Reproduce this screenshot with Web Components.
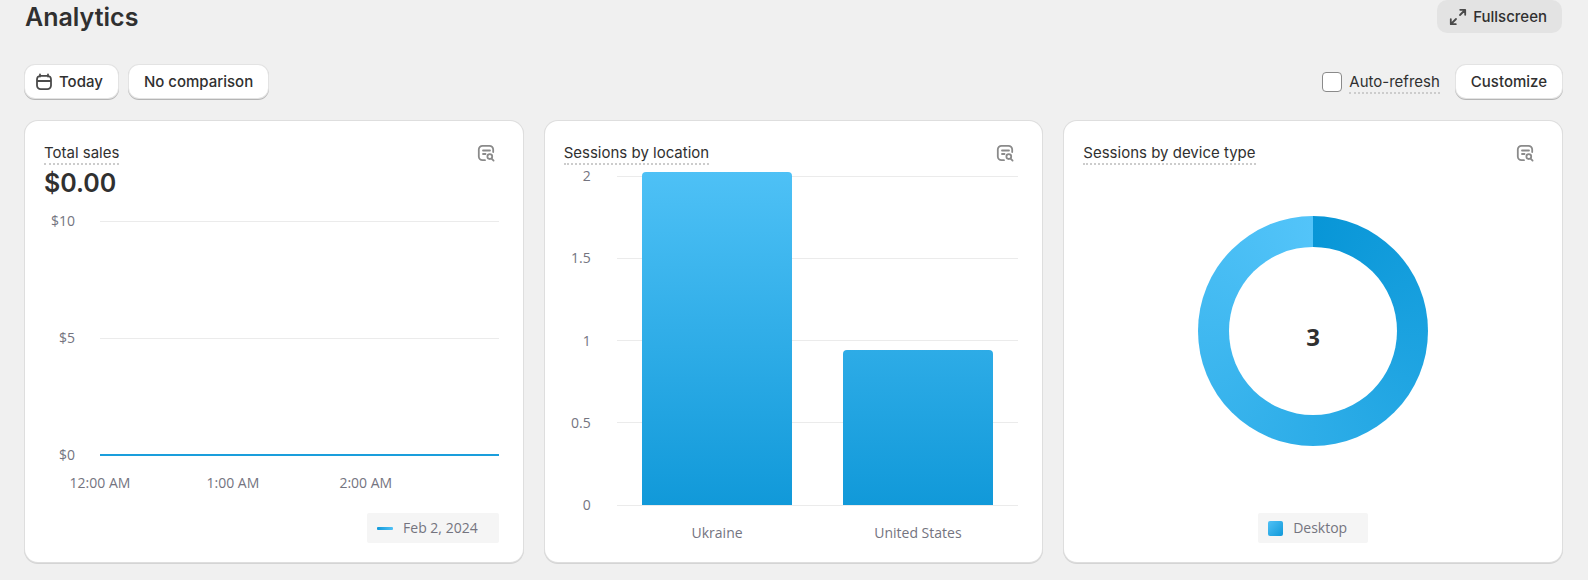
<!DOCTYPE html>
<html lang="en">
<head>
<meta charset="utf-8">
<meta name="viewport" content="width=device-width, initial-scale=1">
<title>Analytics</title>
<style>
body { margin: 0; background: #f0f0f0; color: #303030; font: 15px/20px Inter, "Liberation Sans", sans-serif; }
</style>
</head>
<body>
<analytics-page>
  <ui-button slot="actions" variant="tonal" icon="expand">Fullscreen</ui-button>
  <ui-button slot="filters" icon="calendar">Today</ui-button>
  <ui-button slot="filters">No comparison</ui-button>
  <ui-check slot="tools">Auto-refresh</ui-check>
  <ui-button slot="tools">Customize</ui-button>
  <report-card heading="Total sales" value="$0.00">
    <line-chart ticks="$10,$5,$0" labels="12:00 AM,1:00 AM,2:00 AM"></line-chart>
    <chart-legend slot="legend" mark="line" align="end">Feb 2, 2024</chart-legend>
  </report-card>
  <report-card heading="Sessions by location">
    <bar-chart ticks="2,1.5,1,0.5,0" labels="Ukraine,United States" heights="333,155"></bar-chart>
  </report-card>
  <report-card heading="Sessions by device type">
    <donut-chart>3</donut-chart>
    <chart-legend slot="legend" mark="square">Desktop</chart-legend>
  </report-card>
</analytics-page>

<script>
const icons = {
  calendar: '<path d="M3 9h14M6 2.5v2M14 2.5v2M6.5 3.8h7a3.7 3.7 0 0 1 3.5 3.7v6a3.7 3.7 0 0 1-3.7 3.7H6.7a3.7 3.7 0 0 1-3.7-3.7v-6a3.7 3.7 0 0 1 3.5-3.7z"/>',
  expand: '<path d="M12 8 17 3M12.2 2.8h5v5M8 12 3 17M7.8 17.2h-5v-5"/>',
  report: '<path d="M9 17.200H6.500a3.700 3.700 0 0 1-3.700-3.700v-7a3.700 3.700 0 0 1 3.700-3.700h7a3.700 3.700 0 0 1 3.700 3.700v2.500M7 7.500h7M7 11h2.500"/><circle cx="13.800" cy="13.600" r="2.400"/><path d="m15.600 15.600 2 2"/>'
};
const icon = name => `<svg viewBox="0 0 20 20" width="20" height="20" fill="none" stroke="currentColor" stroke-width="1.8" stroke-linecap="round" stroke-linejoin="round" aria-hidden="true">${icons[name]}</svg>`;

class Base extends HTMLElement {
  connectedCallback() {
    if (!this.shadowRoot) this.attachShadow({ mode: 'open' }).innerHTML = this.render();
  }
  list(name) { return this.getAttribute(name).split(','); }
}

customElements.define('ui-button', class extends Base {
  render() {
    const name = this.getAttribute('icon');
    return `<style>
      :host { display: block; }
      button { display: flex; align-items: center; gap: 5px; height: 33px; padding: 0 15px; border: 0; border-radius: 10px;
        background: #fff; color: inherit; font: inherit; font-weight: 500; white-space: nowrap;
        box-shadow: 0 0 0 1px #e3e3e3, 0 1px 0 1px #b5b5b5; }
      button:has(svg) { padding-left: 9px; }
      svg { color: #4a4a4a; }
      :host([variant=tonal]) button { background: #e3e3e3; box-shadow: none; padding-left: 11px; }
    </style><button type="button">${name ? icon(name) : ''}<slot></slot></button>`;
  }
});

customElements.define('ui-check', class extends Base {
  render() {
    return `<style>
      :host { display: flex; align-items: center; gap: 7px; }
      input { appearance: none; width: 20px; height: 20px; margin: 0; border: 1px solid #8a8a8a; border-radius: 4px; background: #fff; }
      input:checked { background: #303030; }
      label { padding-top: 2px; border-bottom: 2px dotted #ccc; }
    </style><input type="checkbox" id="check"><label for="check"><slot></slot></label>`;
  }
});

customElements.define('analytics-page', class extends Base {
  render() {
    return `<style>
      :host { display: block; padding: 0 26px 18px 25px; }
      header, .toolbar, .group { display: flex; align-items: center; }
      header, .toolbar { justify-content: space-between; }
      header { height: 33px; }
      h1 { margin: 0; font-size: 25px; line-height: 32px; font-weight: 600; }
      .toolbar { margin: 32px 0 23px; }
      .group { gap: 11px; }
      .tools { gap: 16px; }
      main { display: grid; grid-template-columns: repeat(3, minmax(0, 1fr)); gap: 22px; }
    </style>
    <header><h1>Analytics</h1><slot name="actions"></slot></header>
    <div class="toolbar">
      <div class="group"><slot name="filters"></slot></div>
      <div class="group tools"><slot name="tools"></slot></div>
    </div>
    <main><slot></slot></main>`;
  }
});

customElements.define('report-card', class extends Base {
  render() {
    const value = this.getAttribute('value');
    return `<style>
      :host { display: flex; flex-direction: column; box-sizing: border-box; padding: 22px 24px 19px 19px; border-radius: 13px;
        background: #fff; box-shadow: 0 0 0 1px #dedede, 0 1px 0 1px #d4d4d4; }
      header { display: flex; justify-content: space-between; align-items: flex-start; padding-right: 3px; }
      h2 { margin: 0; font: inherit; border-bottom: 2px dotted #ccc; }
      button { display: flex; padding: 0; border: 0; background: none; color: #8a8a8a; }
      .value { margin: 4px 0 14px; font-size: 25px; line-height: 28px; font-weight: 600; }
      .foot { margin: auto 0 0 5px; display: flex; flex-direction: column; }
    </style>
    <header><h2>${this.getAttribute('heading')}</h2><button type="button" aria-label="View report">${icon('report')}</button></header>
    ${value ? `<p class="value">${value}</p>` : ''}
    <slot></slot>
    <div class="foot"><slot name="legend"></slot></div>`;
  }
});

const axisCss = `
  :host { display: block; color: #74747f; font: 14px/20px "Open Sans", "Noto Sans", sans-serif; }
  .ticks { display: flex; flex-direction: column; justify-content: space-between; }
  .tick { display: grid; align-items: center; text-align: right; }
  .tick i { height: 1px; background: #ebebeb; }
  .x { display: grid; grid-auto-flow: column; grid-auto-columns: 1fr; margin-top: 8px; white-space: nowrap; }`;
const ticks = list => list.map(t => `<div class="tick"><span>${t}</span><i></i></div>`).join('');

customElements.define('line-chart', class extends Base {
  render() {
    return `<style>${axisCss}
      .ticks { height: 254px; }
      .tick { grid-template-columns: 31px 1fr; column-gap: 25px; }
      .tick:last-child i { height: 2px; background: #1a9edc; }
      .x { margin-left: 56px; }
      .x span { display: flex; justify-content: center; width: 0; }
    </style>
    <div class="ticks">${ticks(this.list('ticks'))}</div>
    <div class="x">${this.list('labels').map(l => `<span>${l}</span>`).join('')}</div>`;
  }
});

customElements.define('bar-chart', class extends Base {
  render() {
    return `<style>${axisCss}
      .plot { display: grid; margin-top: 1px; }
      .ticks, .bars { grid-area: 1 / 1; }
      .ticks { height: 349px; }
      .tick { grid-template-columns: 27px 1fr; column-gap: 26px; }
      .bars { display: grid; grid-auto-flow: column; grid-auto-columns: 1fr; align-items: end; justify-items: center; margin: 0 0 10px 53px; }
      .bars i { width: 75%; border-radius: 4px 4px 0 0; background: linear-gradient(#4ec1f6, #1199d9) bottom / 100% 333px no-repeat; }
      .x { margin-left: 53px; text-align: center; }
    </style>
    <div class="plot">
      <div class="ticks">${ticks(this.list('ticks'))}</div>
      <div class="bars">${this.list('heights').map(h => `<i style="height:${h}px"></i>`).join('')}</div>
    </div>
    <div class="x">${this.list('labels').map(l => `<span>${l}</span>`).join('')}</div>`;
  }
});

customElements.define('donut-chart', class extends Base {
  render() {
    return `<style>
      :host { display: flex; justify-content: center; margin: 51px 0 20px 5px; font: 700 24px/32px "Open Sans", "Noto Sans", sans-serif; }
      .ring, .hole { display: grid; place-items: center; border-radius: 50%; }
      .ring { width: 230px; height: 230px; background: conic-gradient(#0896d7, #2dade8 50%, #53c4f9); }
      .hole { box-sizing: border-box; width: 168px; height: 168px; padding-top: 12px; background: #fff; }
    </style><div class="ring"><div class="hole"><slot></slot></div></div>`;
  }
});

customElements.define('chart-legend', class extends Base {
  render() {
    return `<style>
      :host { display: flex; align-items: center; align-self: center; height: 30px; padding: 0 21px 0 10px; gap: 10px; border-radius: 2px;
        background: #f5f5f5; color: #74747f; font: 14px/20px "Open Sans", "Noto Sans", sans-serif; }
      :host([align=end]) { align-self: flex-end; }
      i { width: 15px; height: 15px; border-radius: 2px; background: linear-gradient(135deg, #50c1f6, #1199d9); }
      :host([mark=line]) i { width: 16px; height: 3px; border-radius: 1px; background: linear-gradient(90deg, #1199d9, #50c1f6); }
    </style><i></i><slot></slot>`;
  }
});
</script>
</body>
</html>
